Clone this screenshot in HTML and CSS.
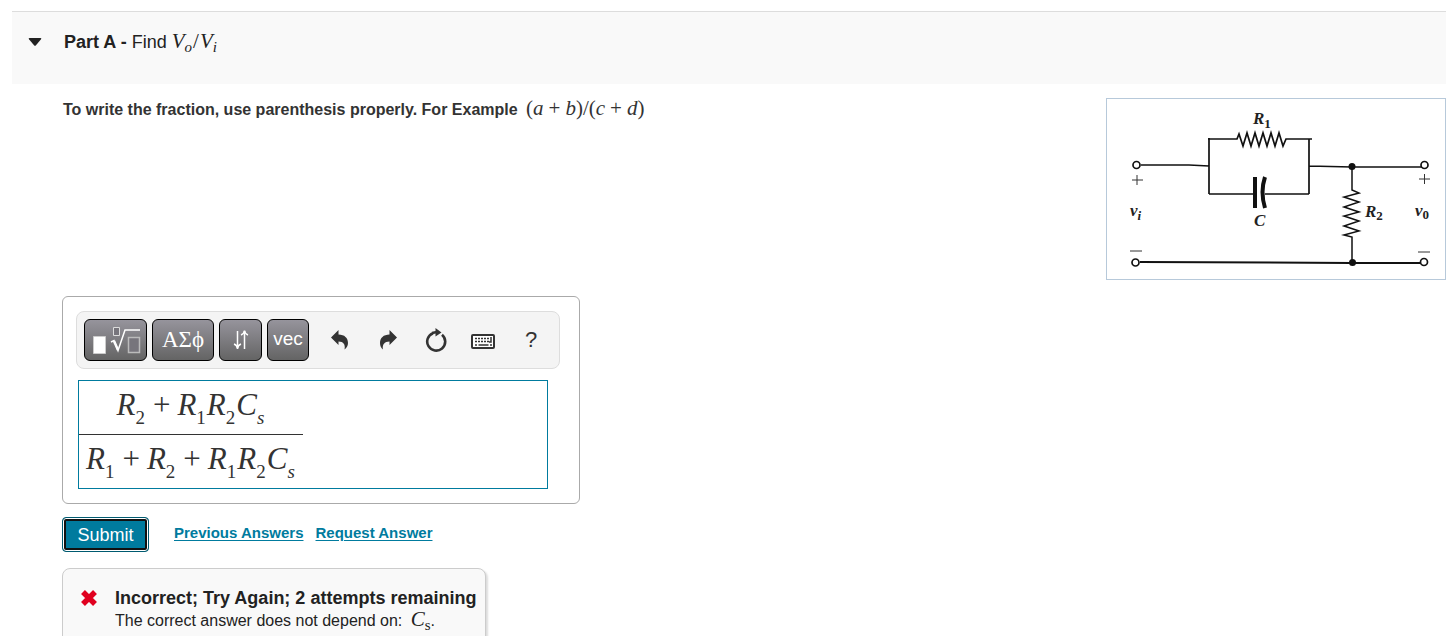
FILE: index.html
```html
<!DOCTYPE html>
<html lang="en">
<head>
<meta charset="utf-8">
<meta name="viewport" content="width=device-width, initial-scale=1">
<title>Part A</title>
<link rel="stylesheet" href="styles.css">
</head>
<body>
<main class="part">
  <header class="part-header">
    <button class="collapse" type="button" aria-label="Collapse Part A" aria-expanded="true">
      <svg width="14" height="8" viewBox="0 0 14 8"><path d="M1.5 0h11q1.500 0 .5 1.200L8 7.200q-1 1-2 0L1 1.200Q0 0 1.500 0z" fill="#222"/></svg>
    </button>
    <h1 class="part-title"><b>Part A -</b> Find <span class="math"><i>V</i><sub><i>o</i></sub><span class="slash">/</span><i>V</i><sub><i>i</i></sub></span></h1>
  </header>

  <div class="part-body">
    <div class="question">
      <p class="prompt"><b>To write the fraction, use parenthesis properly. For Example</b> <span class="math example">(<i>a</i><span class="op">+</span><i>b</i>)/(<i>c</i><span class="op">+</span><i>d</i>)</span></p>
      <figure class="circuit">
        <svg width="338" height="180" viewBox="0 0 338 180" role="img" aria-label="Circuit diagram">
          <g fill="none" stroke="#111" stroke-width="1.7">
            <path d="M34 66h48l20 1M102 39v56M101 40h29l2-5 4 12 4-13 4 13 4-13 4 13 4-13 4 13 4-13 4 13 4-13 4 13 3-7h26M202 40v55M202 67l43 1h70M102 95h45M158 95h44" />
            <path d="M245 68v23l7 3-15 4 15 5-15 5 15 5-15 4 15 5-15 5 15 5-15 4 8 2v27" stroke-width="1.5"/>
            <path d="M33 163l212 1h71" stroke-width="2"/>
            <path d="M148 78v31" stroke-width="4"/>
            <path d="M158 78q-5 15 0 31" stroke-width="4"/>
          </g>
          <g fill="#fff" stroke="#111" stroke-width="1.7">
            <circle cx="29.500" cy="66" r="3.500"/><circle cx="28.500" cy="163.500" r="3.500"/>
            <circle cx="317.500" cy="66" r="3.500"/><circle cx="317" cy="163" r="3.500"/>
          </g>
          <circle cx="245" cy="67.500" r="3.500" fill="#111"/><circle cx="245.500" cy="163.500" r="3.500" fill="#111"/>
          <path d="M25 81h11M30 76v10M23 152h12M312 80h11M317.500 75v10M311 153h12" stroke="#333" fill="none"/>
          <g class="circuit-labels">
            <text x="146" y="25">R<tspan class="digit" dy="4">1</tspan></text>
            <text x="147" y="127">C</text>
            <text x="258" y="118">R<tspan class="digit" dy="3">2</tspan></text>
            <text x="23" y="117">v<tspan class="index" dy="4">i</tspan></text>
            <text x="308" y="117">v<tspan class="digit" dy="3">0</tspan></text>
          </g>
        </svg>
      </figure>
    </div>

    <section class="editor" aria-label="Answer editor">
      <div class="toolbar" role="toolbar" aria-label="Math tools">
        <button class="key key-wide" type="button" aria-label="Templates">
          <svg width="50" height="30" viewBox="0 0 50 30"><path d="M2.500 11.500h12v17h-12z" fill="#fff" stroke="#ccc"/><path d="M22.500 2.500h6v8h-6z" fill="#77757c" stroke="#ddd"/><path d="M37.500 12.500h11v15h-11z" fill="#77757c" stroke="#bbb" stroke-width="1.500"/><path d="M20 17l3-1.500 4 10L34 5h15" fill="none" stroke="#fff" stroke-width="1.500"/><path d="M23 16l4 9" stroke="#fff" stroke-width="2.500"/></svg>
        </button>
        <button class="key key-greek" type="button">ΑΣϕ</button>
        <button class="key key-arrows" type="button" aria-label="Arrows">
          <svg width="18" height="22" viewBox="0 0 18 22" fill="none" stroke="#fff"><path d="M5.500 2v18M12.500 20V2" stroke-width="1.500"/><path d="M2 15q3 1 3.500 4.500Q6 16 9 15M9 6q3-1 3.500-4.500Q13 5 16 6" stroke-width="1.500"/></svg>
        </button>
        <button class="key key-vec" type="button">vec</button>
        <div class="tools">
          <button class="tool" type="button" aria-label="Undo">
            <svg width="20" height="20" viewBox="0 0 20 20"><path d="M1 7.500L8.500 0v4.500c6 0 9.500 3.500 9.500 8.500 0 3-1.500 5-3.500 6.500 1-5-1-8-6-8V15z" fill="#333"/></svg>
          </button>
          <button class="tool" type="button" aria-label="Redo">
            <svg width="20" height="20" viewBox="0 0 20 20"><path d="M19 7.500L11.500 0v4.500C5.500 4.500 2 8 2 13c0 3 1 5 3 6.500-1-5 1.500-8 6.500-8V15z" fill="#333"/></svg>
          </button>
          <button class="tool" type="button" aria-label="Reset">
            <svg width="22" height="24" viewBox="0 0 22 24"><path d="M8 5.200A9 9 0 1 0 17 6.700" fill="none" stroke="#333" stroke-width="2.600"/><path d="M10.500 0l6 4.500-6 4z" fill="#333"/><path d="M7 5l5-1" stroke="#333" stroke-width="2.600"/></svg>
          </button>
          <button class="tool" type="button" aria-label="Keyboard">
            <svg width="24" height="20" viewBox="0 0 24 20"><rect x="1" y="5" width="22" height="13" rx="1" fill="#fff" stroke="#333" stroke-width="2"/><path d="M4 8.500h14M4 11.500h14" fill="none" stroke="#333" stroke-width="1.500" stroke-dasharray="2 1"/><path d="M20 7v5h-2M4 15h2M7.500 15h10M19 15h2" fill="none" stroke="#333" stroke-width="1.500"/></svg>
          </button>
          <button class="tool tool-help" type="button" aria-label="Help">?</button>
        </div>
      </div>
      <div class="answer" role="textbox" tabindex="0" aria-label="Answer">
        <div class="fraction">
          <div class="numerator"><i>R</i><sub>2</sub><span class="plus">+</span><i>R</i><sub>1</sub><i>R</i><sub>2</sub><i>C</i><sub><i>s</i></sub></div>
          <div class="denominator"><i>R</i><sub>1</sub><span class="plus">+</span><i>R</i><sub>2</sub><span class="plus">+</span><i>R</i><sub>1</sub><i>R</i><sub>2</sub><i>C</i><sub><i>s</i></sub></div>
        </div>
      </div>
    </section>

    <div class="actions">
      <button class="submit" type="button">Submit</button>
      <a class="link" href="#previous">Previous Answers</a>
      <a class="link" href="#request">Request Answer</a>
    </div>

    <section class="feedback">
      <svg class="cross" width="18" height="18" viewBox="0 0 18 18"><path d="M3 3l12 12M15 3L3 15" stroke="#e0001f" stroke-width="5.500"/></svg>
      <div>
        <h2 class="feedback-title">Incorrect; Try Again; 2 attempts remaining</h2>
        <p class="feedback-text">The correct answer does not depend on: <span class="math example"><i>C</i><sub>s</sub></span>.</p>
      </div>
    </section>
  </div>
</main>
</body>
</html>
```
FILE: styles.css
```css
* { box-sizing: border-box; }
body {
  margin: 0;
  background: #fff;
  color: #333;
  font-family: "Liberation Sans", Arial, sans-serif;
  font-size: 16px;
}
h1, h2, p, figure { margin: 0; }
button { font: inherit; padding: 0; border: 0; background: none; cursor: pointer; }
svg { display: block; }
sub { line-height: 0; }

.part { padding: 11px 0 0 12px; }
.part-header {
  display: flex;
  align-items: flex-start;
  gap: 22px;
  padding: 18px 16px 30px;
  border-top: 1px solid #ddd;
  background: #f9f9f9;
}
.collapse { display: flex; align-items: center; height: 23px; width: 14px; }
.part-title { font-size: 18px; line-height: 24px; font-weight: 400; color: #222; }
.math {
  font-family: "Liberation Serif", "Times New Roman", serif;
  font-size: 21px;
  line-height: 20px;
}
.math sub { font-size: 15px; vertical-align: -4px; }
.slash { margin: 0 1px; }
.example { margin-left: 4px; }
.op { margin: 0 5px; }

.part-body { padding-left: 50px; }
.question {
  display: flex;
  justify-content: space-between;
  align-items: flex-start;
  padding-top: 14px;
}
.prompt { padding-left: 1px; font-size: 16px; line-height: 20px; }
.circuit { flex: none; border: 1px solid #b7c9da; }
.circuit-labels { font: italic bold 17px "Liberation Serif", serif; fill: #222; }
.circuit-labels .digit { font-size: 13px; font-style: normal; }
.circuit-labels .index { font-size: 13px; }

.editor {
  max-width: 518px;
  margin-top: 16px;
  padding: 14px 19px 14px 13px;
  border: 1px solid #aaa;
  border-radius: 6px;
}
.toolbar {
  display: flex;
  align-items: center;
  gap: 5px;
  padding: 7px;
  border: 1px solid #ddd;
  border-radius: 8px;
  background: #f4f4f4;
}
.key {
  display: flex;
  align-items: center;
  justify-content: center;
  height: 42px;
  border: 1px solid #000;
  border-radius: 6px;
  background: linear-gradient(#96949c, #646464);
  color: #fff;
}
.key-wide { width: 63px; }
.key-greek { width: 62px; font-family: "Liberation Serif", serif; font-size: 23px; }
.key-arrows { width: 43px; }
.key-vec { width: 42px; font-size: 19px; padding-bottom: 3px; }
.tools { display: flex; flex: 1; justify-content: space-between; padding: 0 9px 0 14px; }
.tool {
  display: flex;
  align-items: center;
  justify-content: center;
  width: 24px;
  height: 24px;
  color: #333;
}
.tool-help { font-size: 22px; }
.answer {
  margin: 11px 12px 0 2px;
  border: 1px solid #007b9e;
  color: #333;
  font-family: "Liberation Serif", "Times New Roman", serif;
  font-size: 31px;
}
.fraction { display: inline-flex; flex-direction: column; vertical-align: top; text-align: center; }
.numerator, .denominator { padding: 0 7px 5px; line-height: 48px; white-space: nowrap; }
.denominator { border-top: 1px solid #333; }
.fraction sub { margin-right: 1px; font-size: 19px; vertical-align: -9px; }
.plus { margin: 0 7px; }

.actions { display: flex; align-items: flex-start; padding-top: 13px; line-height: 32px; }
.submit {
  width: 87px;
  height: 35px;
  border: 1px solid #005a70;
  border-radius: 4px;
  background: #007b9e;
  box-shadow: inset 0 0 0 1px #fff, inset 0 0 0 3px #111;
  color: #fff;
  font-size: 18px;
}
.link { color: #007b9e; font-size: 15px; font-weight: 700; text-underline-offset: 2px; }
.submit + .link { margin: 0 12px 0 25px; }

.feedback {
  display: flex;
  gap: 17px;
  max-width: 424px;
  margin-top: 16px;
  padding: 18px 17px 24px;
  border: 1px solid #ccc;
  border-radius: 8px;
  background: #f9f9f9;
  box-shadow: 2px 2px 2px #ddd;
  color: #222;
}
.cross { flex: none; margin-top: 2px; }
.feedback-title { font-size: 18px; line-height: 22px; white-space: nowrap; }
.feedback-text { font-size: 16px; line-height: 22px; white-space: nowrap; }
```
